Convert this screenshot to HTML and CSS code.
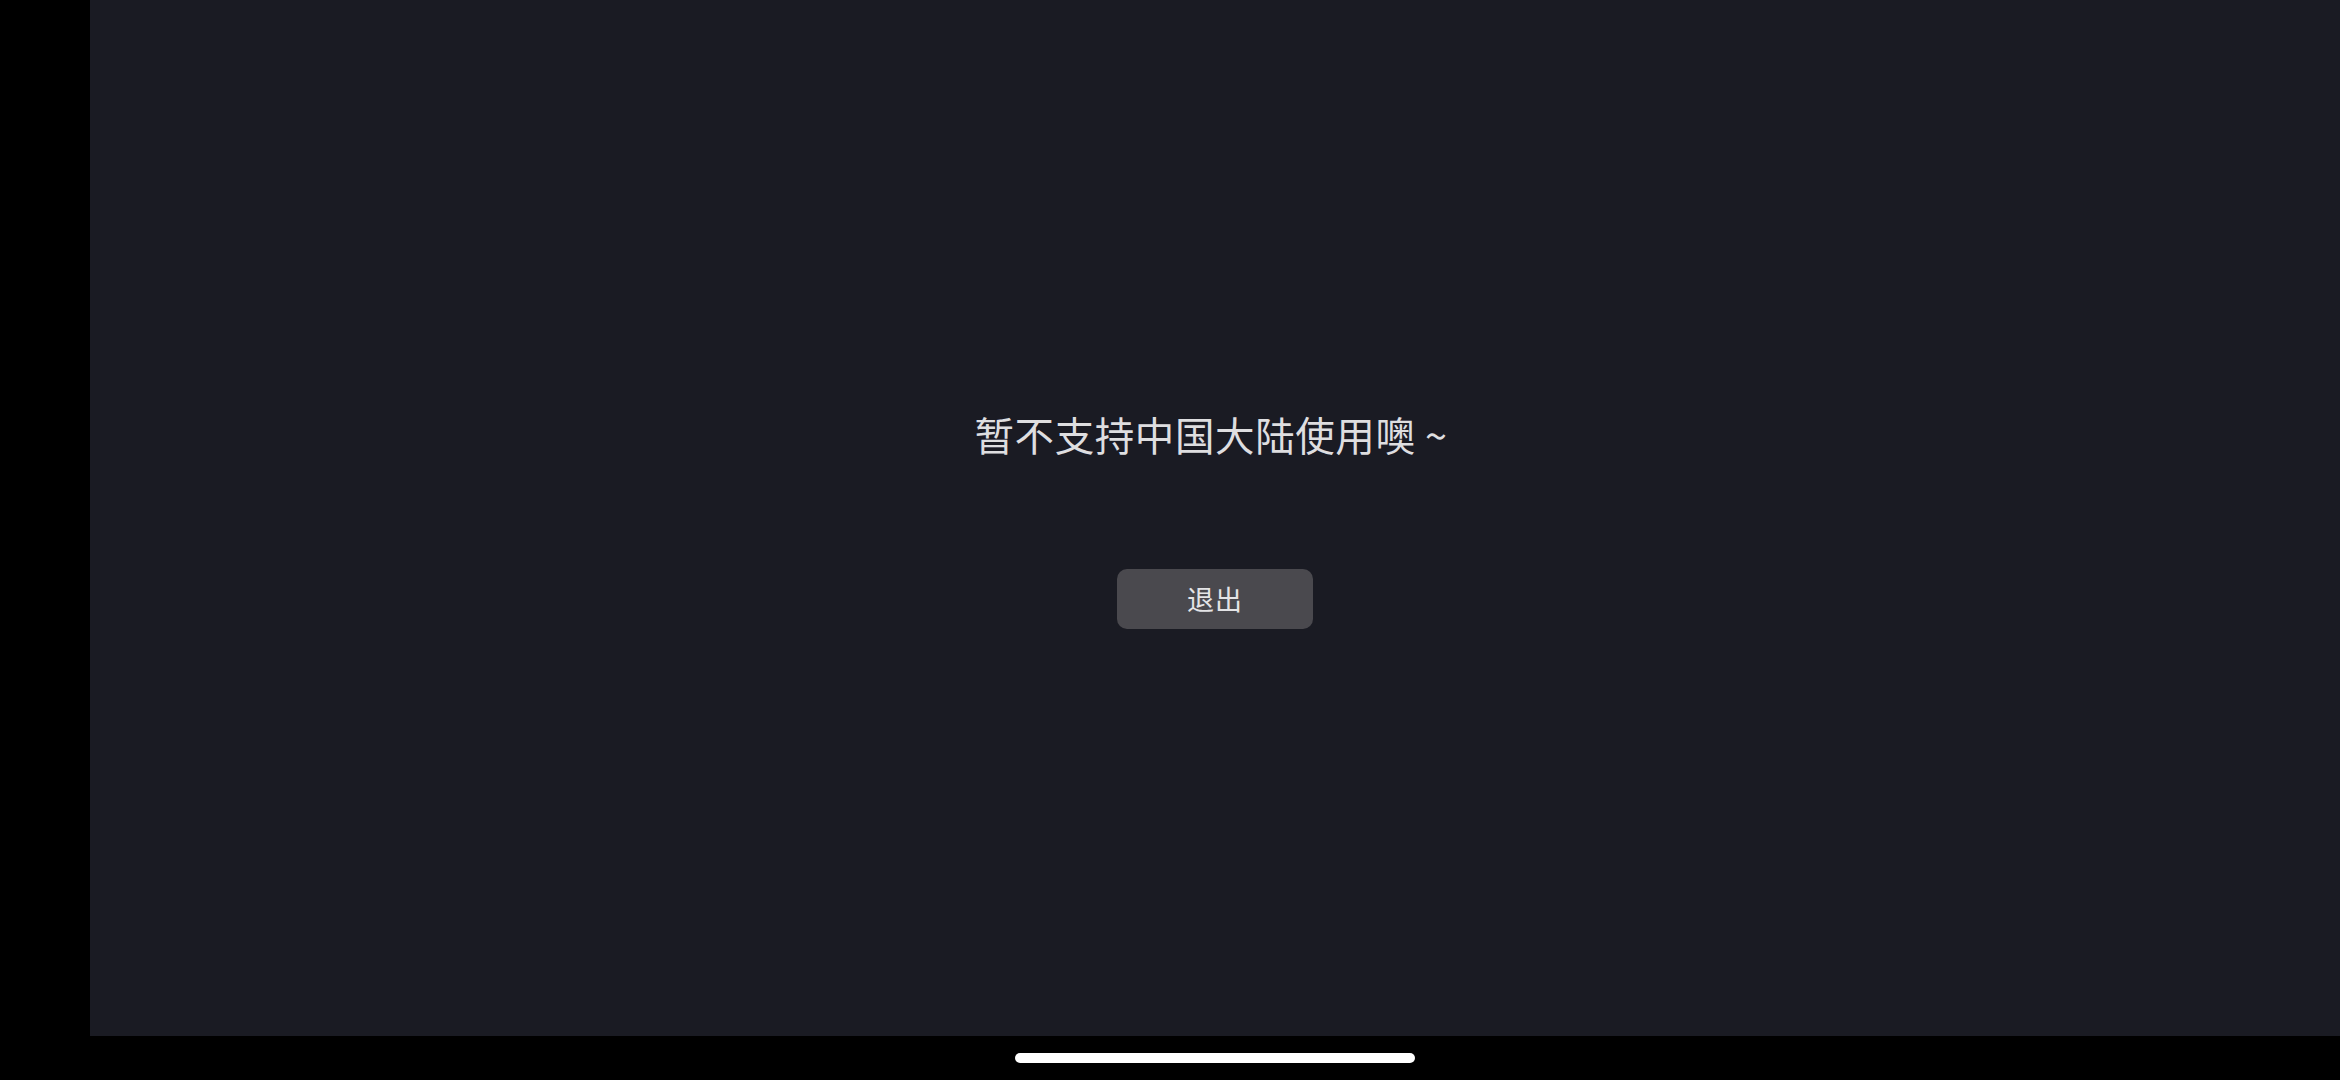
FILE: index.html
```html
<!DOCTYPE html>
<html lang="zh-CN">
<head>
<meta charset="utf-8">
<title>暂不支持</title>
<link rel="stylesheet" href="styles.css">
</head>
<body>
<div class="screen">
  <div class="main-row">
    <div class="side-bar"></div>
    <main class="panel">
      <p class="message">暂不支持中国大陆使用噢 ~</p>
      <button class="exit-btn" type="button">退出</button>
    </main>
  </div>
  <div class="bottom-row">
    <div class="home-indicator"></div>
  </div>
</div>
</body>
</html>
```

FILE: styles.css
```css
html, body {
  margin: 0;
  padding: 0;
  background: #000;
  width: 2340px;
  height: 1080px;
  overflow: hidden;
  font-family: "Noto Sans CJK SC", "Noto Sans", sans-serif;
}

.screen {
  display: flex;
  flex-direction: column;
  width: 2340px;
  height: 1080px;
}

.main-row {
  display: flex;
  height: 1036px;
}

.side-bar {
  width: 90px;
  background: #000;
}

.panel {
  flex: 1;
  background: #1a1b23;
  display: flex;
  flex-direction: column;
  align-items: center;
  padding-top: 408px;
  box-sizing: border-box;
}

.message {
  margin: 0;
  padding-right: 8px;
  font-size: 39.5px;
  line-height: 52px;
  color: #dedee0;
  letter-spacing: 0.6px;
}

.exit-btn {
  margin-top: 109px;
  width: 196px;
  height: 60px;
  border: none;
  border-radius: 10px;
  background: #4a494e;
  color: #e4e4e6;
  font-family: "Noto Sans CJK SC", "Noto Sans", sans-serif;
  font-size: 27px;
  line-height: 60px;
  padding: 0;
  letter-spacing: 1px;
}

.bottom-row {
  flex: 1;
  display: flex;
  padding-left: 90px;
  justify-content: center;
  align-items: flex-start;
}

.home-indicator {
  margin-top: 17px;
  width: 400px;
  height: 10px;
  border-radius: 5px;
  background: #fff;
}
```
